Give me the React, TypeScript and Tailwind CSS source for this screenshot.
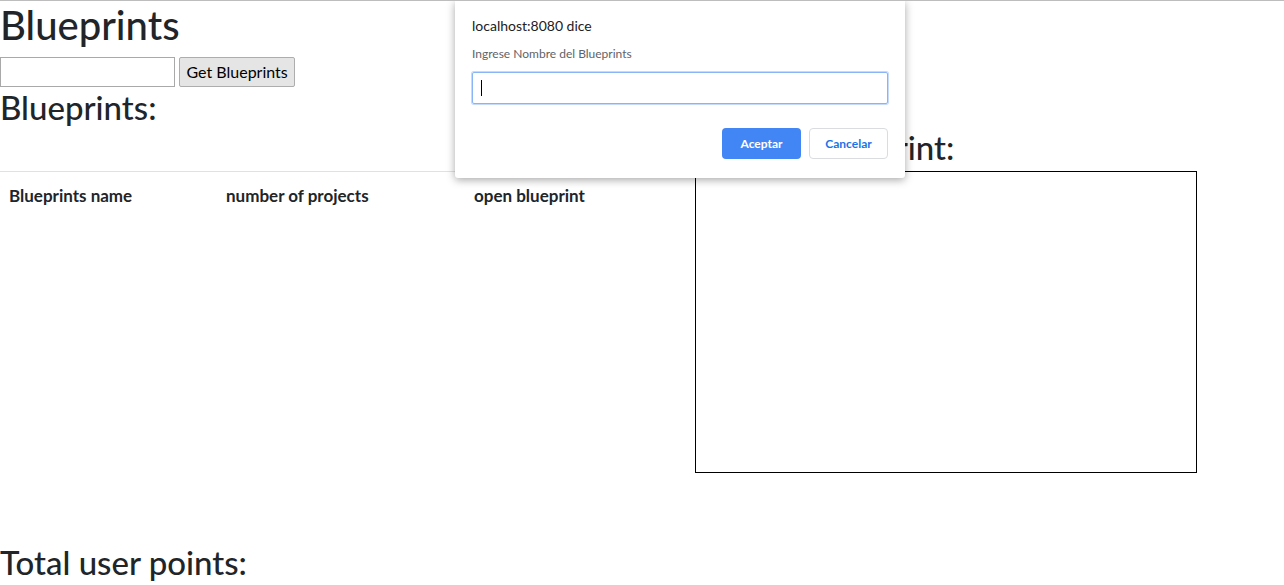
import React from 'react';

const font = { fontFamily: '"Lato", "Noto Sans", sans-serif' };

const PromptDialog: React.FC = () => (
  <div className="absolute left-[455px] top-0 w-[450px] h-[177px] bg-white rounded-b-[3px] shadow-[0_2px_8px_rgba(0,0,0,0.35)] px-[17px] pt-[15px]">
    <div className="text-[14px] leading-[20px] text-[#202124]">localhost:8080 dice</div>
    <div className="mt-[10px] text-[12px] leading-[16px] text-[#5f6368]">Ingrese Nombre del Blueprints</div>
    <div className="mt-[10px] h-[32px] w-[416px] border border-[#8ab4f8] rounded-[2px] shadow-[0_0_0_1px_#c6dafc] flex items-center pl-[8px]">
      <div className="w-px h-[16px] bg-black" />
    </div>
    <div className="mt-[24px] flex justify-end gap-[8px]">
      <button className="w-[79px] h-[31px] rounded-[4px] bg-[#4285f4] text-white text-[12px] font-bold">Aceptar</button>
      <button className="w-[79px] h-[31px] rounded-[4px] border border-[#dadce0] bg-white text-[#1a73e8] text-[12px] font-bold">Cancelar</button>
    </div>
  </div>
);

export default function App() {
  return (
    <div className="relative w-[1284px] h-[585px] overflow-hidden bg-white border-t border-[#bdbdbd] text-[#212529]" style={font}>
      <h1 className="text-[40px] leading-[48px] font-medium">Blueprints</h1>
      <div className="mt-2 flex items-center gap-[4px] h-[30px]">
        <input className="w-[175px] h-[30px] border border-[#a9a9a9] bg-white" />
        <button className="h-[30px] px-[6.5px] border border-[#adadad] bg-[#e5e5e5] text-[16px] text-black rounded-[2px]">Get Blueprints</button>
      </div>
      <div className="mt-[1px] flex">
        <div className="w-[695px]">
          <h2 className="text-[33px] leading-[38px] font-medium">Blueprints:</h2>
          <table className="mt-[45px] w-full border-t border-[#dee2e6] text-left">
            <thead>
              <tr className="text-[17px] leading-[24px] font-bold">
                <th className="w-[217px] py-3 px-[9px]">Blueprints name</th>
                <th className="w-[248px] py-3 px-[9px]">number of projects</th>
                <th className="py-3 px-[9px]">open blueprint</th>
              </tr>
            </thead>
          </table>
        </div>
        <div className="pt-[40px]">
          <h2 className="text-[33px] leading-[38px] font-medium mb-[5px]">Current blueprint:</h2>
          <div className="w-[502px] h-[302px] border border-black" />
        </div>
      </div>
      <h2 className="mt-[70px] text-[33px] leading-[38px] font-medium">Total user points:</h2>
      <PromptDialog />
    </div>
  );
}
